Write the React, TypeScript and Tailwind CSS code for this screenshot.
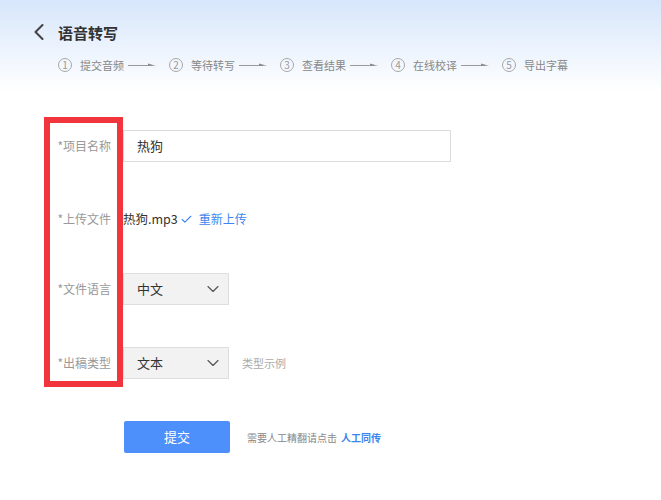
import { ChevronLeft, ChevronDown, Check } from "lucide-react";

const font = { fontFamily: '"Noto Sans CJK SC", "Noto Sans", sans-serif' };

const steps = ["提交音频", "等待转写", "查看结果", "在线校译", "导出字幕"];

function Arrow() {
  return (
    <svg width="28" height="6" viewBox="0 0 28 6" className="ml-[4px] mr-[13px] shrink-0">
      <line x1="0" y1="3.5" x2="24" y2="3.5" stroke="#9a9a9a" strokeWidth="1" />
      <path d="M20 1.5 L28 3.8 L20 3.8 Z" fill="#8a8a8a" />
    </svg>
  );
}

function Select({ value }: { value: string }) {
  return (
    <div className="h-[32px] w-[106px] border border-[#dedede] bg-[#f2f2f2] flex items-center justify-between pl-[13px] pr-[5px] text-[13px] text-[#333]">
      <span>{value}</span>
      <ChevronDown size={20} strokeWidth={1.4} className="text-[#555]" />
    </div>
  );
}

export default function App() {
  return (
    <div className="w-[661px] h-[500px] bg-white overflow-hidden" style={font}>
      {/* header */}
      <div className="h-[92px] bg-gradient-to-b from-[#d7e6fb] to-white pt-[18px]">
        <div className="flex items-center pl-[25px] h-[28px]">
          <ChevronLeft size={28} strokeWidth={1.8} className="text-[#444]" />
          <span className="ml-[5px] text-[15px] font-bold text-[#333] leading-none">语音转写</span>
        </div>
        <div className="flex items-center pl-[58px] mt-[11px] h-[16px]">
          {steps.map((s, i) => (
            <div key={s} className="flex items-center">
              <span className="w-[14px] h-[14px] rounded-full border border-[#a8a8a8] text-[10px] leading-none text-[#999] flex items-center justify-center shrink-0">
                {i + 1}
              </span>
              <span className="ml-[8px] w-[44px] text-[11px] text-[#888] leading-none whitespace-nowrap">{s}</span>
              {i < steps.length - 1 && <Arrow />}
            </div>
          ))}
        </div>
      </div>

      {/* form */}
      <div className="flex mt-[25px]">
        <div className="ml-[44px] w-[79px] h-[270px] border-[6px] border-[#f2343c] pt-[7px] flex flex-col text-[12px] text-[#999]">
          <div className="h-[32px] flex items-center justify-end pr-[6px]">*项目名称</div>
          <div className="h-[32px] flex items-center justify-end pr-[6px] mt-[41px]">*上传文件</div>
          <div className="h-[32px] flex items-center justify-end pr-[6px] mt-[38px]">*文件语言</div>
          <div className="h-[32px] flex items-center justify-end pr-[6px] mt-[42px]">*出稿类型</div>
        </div>
        <div className="pt-[13px] flex flex-col">
          <div className="h-[32px] w-[328px] border border-[#dcdcdc] flex items-center pl-[13px] text-[13px] text-[#333]">
            热狗
          </div>
          <div className="h-[32px] flex items-center mt-[41px] text-[12.5px]">
            <span className="text-[#333]">热狗.mp3</span>
            <Check size={13} strokeWidth={2} className="text-[#3d86ef] ml-[2px]" />
            <span className="ml-[6px] text-[12px] text-[#3d86ef]">重新上传</span>
          </div>
          <div className="h-[32px] flex items-center mt-[38px]">
            <Select value="中文" />
          </div>
          <div className="h-[32px] flex items-center mt-[42px]">
            <Select value="文本" />
            <span className="ml-[13px] text-[11px] text-[#aaa]">类型示例</span>
          </div>
        </div>
      </div>

      {/* submit */}
      <div className="flex items-center mt-[34px] pl-[124px]">
        <button className="w-[106px] h-[32px] bg-[#4d8ffb] rounded-[2px] text-white text-[13px]">提交</button>
        <span className="ml-[17px] text-[10px] text-[#888]">需要人工精翻请点击</span>
        <span className="ml-[4px] text-[10px] font-bold text-[#3d86ef]">人工同传</span>
      </div>
    </div>
  );
}
